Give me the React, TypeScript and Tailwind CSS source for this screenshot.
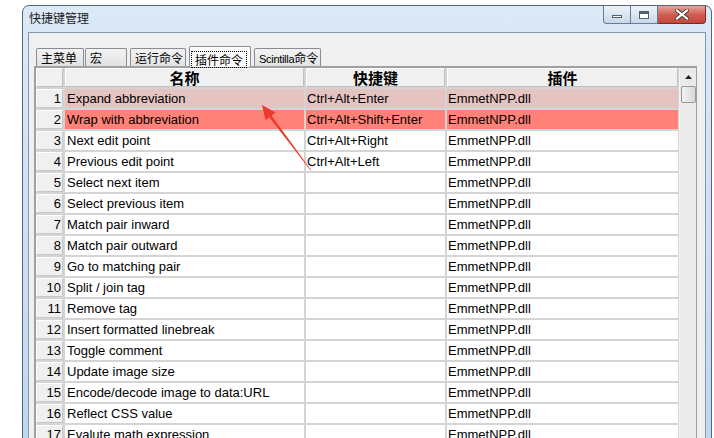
import React from 'react';

const rows: [string, string][] = [
  ['Expand abbreviation', 'Ctrl+Alt+Enter'],
  ['Wrap with abbreviation', 'Ctrl+Alt+Shift+Enter'],
  ['Next edit point', 'Ctrl+Alt+Right'],
  ['Previous edit point', 'Ctrl+Alt+Left'],
  ['Select next item', ''],
  ['Select previous item', ''],
  ['Match pair inward', ''],
  ['Match pair outward', ''],
  ['Go to matching pair', ''],
  ['Split / join tag', ''],
  ['Remove tag', ''],
  ['Insert formatted linebreak', ''],
  ['Toggle comment', ''],
  ['Update image size', ''],
  ['Encode/decode image to data:URL', ''],
  ['Reflect CSS value', ''],
  ['Evalute math expression', ''],
];

const cjk = "font-['Noto_Sans_CJK_SC',sans-serif]";

function rowBg(i: number) {
  if (i === 0) return 'bg-[#e5c3c0]';
  if (i === 1) return 'bg-[#ff8177]';
  return 'bg-white';
}

function Tab({ label, w, active }: { label: React.ReactNode; w: string; active?: boolean }) {
  if (active) {
    return (
      <div className={`${w} h-[21px] mb-[-1px] relative z-10 border border-b-0 border-[#898c95] bg-[#fcfcfc] rounded-t-[2px] pt-[1px] pl-[1px]`}>
        <span className={`inline-block border border-dotted border-black px-[3px] leading-[15px] text-[12px] ${cjk}`}>{label}</span>
      </div>
    );
  }
  return (
    <div className={`${w} h-[18px] border border-b-0 border-[#898c95] bg-gradient-to-b from-[#f3f3f3] to-[#e2e2e2] rounded-t-[2px] pl-[4px] text-[12px] leading-[17px] whitespace-nowrap overflow-hidden ${cjk}`}>
      {label}
    </div>
  );
}

export default function App() {
  return (
    <div className="relative w-[714px] h-[438px] overflow-hidden bg-white pl-[22px] pt-[5px] font-['Liberation_Sans',Arial,sans-serif] text-black">
      <div className="w-[690px] h-[460px] rounded-t-[7px] border border-[#54657d] bg-gradient-to-b from-[#dce9f7] via-[#cfe0f3] to-[#bed6f0] flex flex-col">
        {/* title bar */}
        <div className="h-[26px] flex items-start shrink-0">
          <div className={`pl-[6px] pt-[4px] text-[12px] leading-[16px] text-[#1b1b1b] ${cjk}`}>快捷键管理</div>
          <div className="ml-auto mr-[5px] flex h-[18px]">
            <div className="w-[28px] h-full border border-t-0 border-[#6a7a92] rounded-bl-[4px] bg-gradient-to-b from-[#eef3f9] to-[#c9d7e8] flex items-center justify-center">
              <div className="w-[10px] h-[3px] mt-[4px] border border-[#4f5f74] bg-white" />
            </div>
            <div className="w-[27px] h-full border border-t-0 border-l-0 border-[#6a7a92] bg-gradient-to-b from-[#eef3f9] to-[#c9d7e8] flex items-center justify-center">
              <div className="w-[10px] h-[8px] border border-[#4f5f74] border-t-[3px] bg-white" />
            </div>
            <div className="w-[48px] h-full border border-t-0 border-l-0 border-[#7a2a22] rounded-br-[4px] bg-gradient-to-b from-[#e6a59a] via-[#cf5f52] to-[#c4473a] flex items-center justify-center">
              <svg width="14" height="11" viewBox="0 0 14 11">
                <path d="M2 1.5 L12 9.5 M12 1.5 L2 9.5" stroke="#3b3b3b" strokeWidth="4" strokeLinecap="square" />
                <path d="M2 1.5 L12 9.5 M12 1.5 L2 9.5" stroke="#ffffff" strokeWidth="2.2" strokeLinecap="square" />
              </svg>
            </div>
          </div>
        </div>

        {/* client area */}
        <div className="ml-[5px] mr-[5px] flex-1 border border-[#8396ae] bg-[#f0f0f0] pl-[5px] pt-[12px]">
          {/* tabs */}
          <div className="h-[21px] flex items-end gap-[1px] pl-[2px]">
            <Tab label="主菜单" w="w-[48px]" />
            <Tab label="宏" w="w-[42px]" />
            <div className="w-[1px]" />
            <Tab label="运行命令" w="w-[56px]" />
            <div className="w-[1px]" />
            <Tab label="插件命令" w="w-[62px]" active />
            <div className="w-[1px]" />
            <Tab
              label={
                <>
                  <span className="font-['Liberation_Sans',sans-serif] text-[11px] tracking-[-0.3px]">Scintilla</span>命令
                </>
              }
              w="w-[67px]"
            />
          </div>

          {/* grid */}
          <div className="w-[663px] h-[380px] border-l-2 border-t-2 border-r border-[#a0a0a0] bg-[#d4d4d4] flex">
            <div className="w-[642px] flex flex-col gap-[2px]">
              <div className="h-[19px] flex gap-[2px]">
                <div className="w-[27px] border border-t-white border-l-white border-r-[#c0c0c0] border-b-[#c0c0c0] bg-[#f0f0f0]" />
                {[
                  ['名称', 'w-[239px]'],
                  ['快捷键', 'w-[139px]'],
                  ['插件', 'w-[231px]'],
                ].map(([t, w]) => (
                  <div
                    key={t}
                    className={`${w} border border-t-white border-l-white border-r-[#c0c0c0] border-b-[#c0c0c0] bg-[#f0f0f0] text-center font-bold text-[15px] leading-[17px] ${cjk}`}
                  >
                    {t}
                  </div>
                ))}
              </div>
              {rows.map(([name, key], i) => (
                <div key={i} className="h-[19px] flex gap-[2px] text-[13px] leading-[19px]">
                  <div className="w-[27px] border border-t-white border-l-white border-r-[#c8c8c8] border-b-[#c8c8c8] bg-[#f0f0f0] text-right pr-[1px] leading-[17px]">
                    {i + 1}
                  </div>
                  <div className={`w-[239px] pl-[2px] whitespace-nowrap ${rowBg(i)}`}>{name}</div>
                  <div className={`w-[139px] pl-[1px] whitespace-nowrap ${rowBg(i)}`}>{key}</div>
                  <div className={`w-[231px] pl-[1px] whitespace-nowrap ${rowBg(i)}`}>EmmetNPP.dll</div>
                </div>
              ))}
            </div>
            <div className="w-[1px]" />
            {/* scrollbar */}
            <div className="w-[17px] bg-[#eaeaea] border-l border-[#f4f4f4] flex flex-col items-center">
              <div className="h-[18px] w-full flex items-center justify-center">
                <svg width="7" height="4" viewBox="0 0 7 4">
                  <path d="M0 4 L3.5 0 L7 4 Z" fill="#222" />
                </svg>
              </div>
              <div className="w-[15px] h-[17px] rounded-[2px] border border-[#979797] bg-gradient-to-r from-[#f2f2f2] to-[#d9d9d9]" />
            </div>
          </div>
        </div>
      </div>

      {/* annotation arrow */}
      <svg className="absolute left-0 top-0 pointer-events-none" width="714" height="438">
        <polygon
          points="262,105 275.5,112.5 271.5,115.5 311.2,170.3 310.6,170.6 269.3,117.2 265.5,120"
          fill="#ee3a2c"
        />
      </svg>
    </div>
  );
}
